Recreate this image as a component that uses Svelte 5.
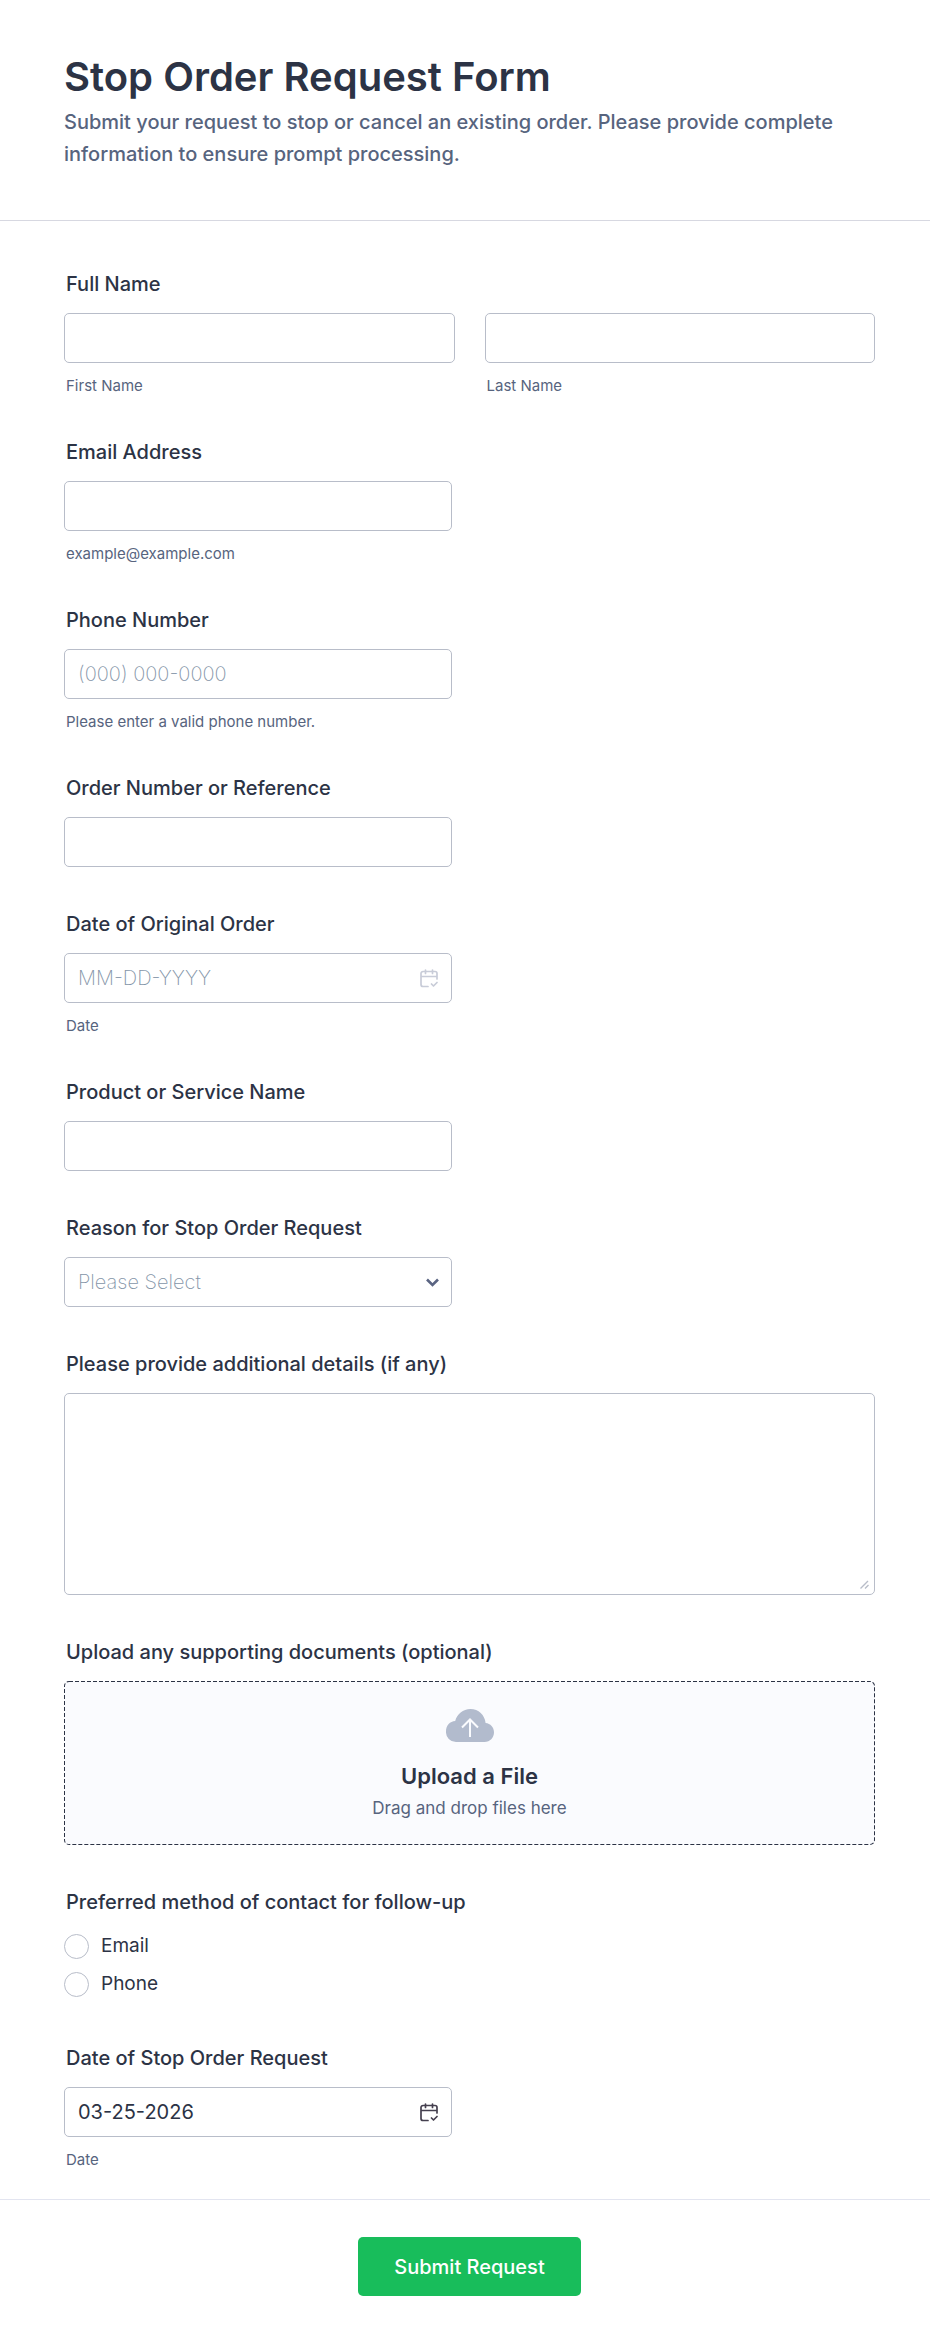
<script lang="ts">
	type Field = {
		id: string;
		label: string;
		type: 'text' | 'email' | 'tel' | 'date';
		placeholder?: string;
		value?: string;
		hint?: string;
	};

	const contactFields: Field[] = [
		{ id: 'email', label: 'Email Address', type: 'email', hint: 'example@example.com' },
		{
			id: 'phone',
			label: 'Phone Number',
			type: 'tel',
			placeholder: '(000) 000-0000',
			hint: 'Please enter a valid phone number.'
		},
		{ id: 'order', label: 'Order Number or Reference', type: 'text' },
		{
			id: 'order-date',
			label: 'Date of Original Order',
			type: 'date',
			placeholder: 'MM-DD-YYYY',
			hint: 'Date'
		},
		{ id: 'product', label: 'Product or Service Name', type: 'text' }
	];

	const requestDate: Field = {
		id: 'request-date',
		label: 'Date of Stop Order Request',
		type: 'date',
		value: '03-25-2026',
		hint: 'Date'
	};

	const contactMethods = ['Email', 'Phone'];

	let reason = $state('');
	let method = $state('');
</script>

{#snippet calendarIcon()}
	<svg viewBox="0 0 18 19" width="18" height="19" aria-hidden="true">
		<path
			d="M17 10V4.5A2 2 0 0 0 15 2.5H3A2 2 0 0 0 1 4.5V15.5A2 2 0 0 0 3 17.5H8M1 7.5H17M5.5 1V4.5M12.5 1V4.5M11.5 15L13.5 17L17 13.5"
		/>
	</svg>
{/snippet}

{#snippet textField(field: Field)}
	<div class="field">
		<label class="label" for={field.id}>{field.label}</label>
		<div class="control half">
			<input
				class="box"
				id={field.id}
				type={field.type === 'date' ? 'text' : field.type}
				placeholder={field.placeholder}
				value={field.value ?? ''}
				aria-describedby={field.hint ? `${field.id}-hint` : undefined}
			/>
			{#if field.type === 'date'}
				<button
					type="button"
					class="calendar"
					class:filled={!!field.value}
					aria-label="Pick a date"
				>
					{@render calendarIcon()}
				</button>
			{/if}
		</div>
		{#if field.hint}
			<span class="hint" id="{field.id}-hint">{field.hint}</span>
		{/if}
	</div>
{/snippet}

<form onsubmit={(e) => e.preventDefault()}>
	<header>
		<h1>Stop Order Request Form</h1>
		<p>
			Submit your request to stop or cancel an existing order. Please provide complete
			information to ensure prompt processing.
		</p>
	</header>

	<div class="fields">
		<div class="field" role="group" aria-labelledby="name-label">
			<span class="label" id="name-label">Full Name</span>
			<div class="name-row">
				<div class="name-part">
					<input class="box" id="first-name" type="text" />
					<label class="hint" for="first-name">First Name</label>
				</div>
				<div class="name-part">
					<input class="box" id="last-name" type="text" />
					<label class="hint" for="last-name">Last Name</label>
				</div>
			</div>
		</div>

		{#each contactFields as field (field.id)}
			{@render textField(field)}
		{/each}

		<div class="field">
			<label class="label" for="reason">Reason for Stop Order Request</label>
			<div class="control half">
				<select class="box" class:unset={reason === ''} id="reason" bind:value={reason}>
					<option value="">Please Select</option>
				</select>
				<svg class="chevron" viewBox="0 0 13 9" width="13" height="9" aria-hidden="true">
					<path d="M1 1.5L6.5 7L12 1.5" />
				</svg>
			</div>
		</div>

		<div class="field">
			<label class="label" for="details">Please provide additional details (if any)</label>
			<div class="control">
				<textarea class="box" id="details"></textarea>
				<svg class="grip" viewBox="0 0 9 9" width="9" height="9" aria-hidden="true">
					<path d="M.5 8.5L8 1M5 8.5L8.5 5" />
				</svg>
			</div>
		</div>

		<div class="field">
			<span class="label" id="upload-label">Upload any supporting documents (optional)</span>
			<label class="dropzone">
				<!-- dashes longer than the browser's own dashed border -->
				<svg class="outline" aria-hidden="true">
					<rect width="100%" height="100%" rx="5" />
				</svg>
				<input class="sr-only" type="file" multiple aria-labelledby="upload-label" />
				<svg class="cloud" viewBox="0 0 48 33" width="48" height="33" aria-hidden="true">
					<path
						class="cloud-body"
						d="M10 33A10 10 0 0 1 0 22.5C0 16.5 4 12.2 9.2 12C11 5 17 0 24.5 0C32.5 0 38.8 6 39.6 14C44.4 14.4 48 18.4 48 23.3C48 28.8 44 33 38.5 33Z"
					/>
					<path class="cloud-arrow" d="M24 28V10.5M16 18.5L24 10.5L32 18.5" />
				</svg>
				<strong>Upload a File</strong>
				<span class="drop-text">Drag and drop files here</span>
			</label>
		</div>

		<div class="field" role="radiogroup" aria-labelledby="method-label">
			<span class="label" id="method-label">Preferred method of contact for follow-up</span>
			<div class="radios">
				{#each contactMethods as option}
					<label class="radio">
						<input type="radio" name="method" value={option} bind:group={method} />
						{option}
					</label>
				{/each}
			</div>
		</div>

		{@render textField(requestDate)}
	</div>

	<footer>
		<button type="submit" class="submit">Submit Request</button>
	</footer>
</form>

<style>
	:global(body) {
		margin: 0;
		background: #fff;
	}

	form {
		font-family: Inter, 'Liberation Sans', sans-serif;
		font-size: 20px;
		line-height: 24px;
		color: #2c3345;
	}

	form * {
		box-sizing: border-box;
	}

	header {
		padding: 52px 55px 50px 64px;
		border-bottom: 1px solid #d7d8e1;
	}

	h1 {
		margin: 0;
		font-size: 40px;
		line-height: 50px;
		font-weight: 600;
	}

	header p {
		margin: 4px 0 0;
		line-height: 32px;
		font-weight: 500;
		color: #57647e;
	}

	.fields {
		display: flex;
		flex-direction: column;
		gap: 45px;
		padding: 51px 55px 30px 64px;
	}

	.field {
		display: flex;
		flex-direction: column;
	}

	.label {
		margin-bottom: 17px;
		padding-left: 2px;
		font-weight: 500;
	}

	.control {
		position: relative;
		display: flex;
	}

	.half {
		max-width: 388px;
	}

	.box {
		width: 100%;
		height: 50px;
		margin: 0;
		padding: 0 13px;
		border: 1px solid #b8bdc9;
		border-radius: 5px;
		background: #fff;
		font: inherit;
		color: inherit;
		outline: none;
	}

	.box:focus {
		border-color: #2e69ff;
	}

	.box::placeholder,
	.unset {
		font-weight: 200;
		color: #8495a8;
		opacity: 1;
	}

	select.box {
		appearance: none;
	}

	textarea.box {
		height: 202px;
		padding: 12px 13px;
		resize: none;
	}

	.hint {
		margin-top: 14px;
		padding-left: 2px;
		font-size: 15px;
		line-height: 18px;
		color: #57647e;
	}

	.name-row {
		display: flex;
		gap: 30px;
	}

	.name-part {
		flex: 1;
		display: flex;
		flex-direction: column;
	}

	.calendar {
		position: absolute;
		top: 0;
		right: 0;
		display: flex;
		align-items: center;
		height: 100%;
		padding: 0 14px;
		border: none;
		background: none;
		color: #c8ccd8;
		cursor: pointer;
	}

	.calendar.filled {
		color: #45404f;
	}

	.calendar path {
		fill: none;
		stroke: currentColor;
		stroke-width: 1.7;
		stroke-linecap: round;
		stroke-linejoin: round;
	}

	.chevron {
		position: absolute;
		top: 21px;
		right: 13px;
		pointer-events: none;
	}

	.chevron path {
		fill: none;
		stroke: #5a6482;
		stroke-width: 2.6;
	}

	.grip {
		position: absolute;
		right: 6px;
		bottom: 6px;
		pointer-events: none;
	}

	.grip path {
		fill: none;
		stroke: #b8bdc9;
		stroke-width: 1.4;
	}

	.dropzone {
		position: relative;
		display: flex;
		flex-direction: column;
		align-items: center;
		padding: 28px 20px 25px;
		border-radius: 5px;
		background: #fafbfe;
		cursor: pointer;
	}

	/* outer half of the stroke is clipped, leaving a 1px line */
	.outline {
		position: absolute;
		inset: 0;
		width: 100%;
		height: 100%;
		border-radius: 5px;
		overflow: hidden;
		pointer-events: none;
	}

	.outline rect {
		fill: none;
		stroke: #2c3345;
		stroke-width: 2;
		stroke-dasharray: 4 2;
	}

	.sr-only {
		position: absolute;
		width: 1px;
		height: 1px;
		overflow: hidden;
		opacity: 0;
	}

	.cloud-body {
		fill: #b2bbcd;
	}

	.cloud-arrow {
		fill: none;
		stroke: #fafbfe;
		stroke-width: 2;
	}

	.dropzone strong {
		margin-top: 20px;
		font-size: 22px;
		line-height: 28px;
		font-weight: 600;
	}

	.drop-text {
		margin-top: 6px;
		font-size: 17px;
		color: #57647e;
	}

	.radios {
		display: flex;
		flex-direction: column;
		gap: 8px;
		padding-bottom: 2px;
	}

	.radio {
		display: flex;
		align-items: center;
		gap: 12px;
		height: 30px;
		font-size: 19px;
	}

	.radio input {
		appearance: none;
		width: 25px;
		height: 25px;
		margin: 0;
		border: 1px solid #b8bdc9;
		border-radius: 50%;
		background: #fff;
	}

	.radio input:checked {
		border: 7px solid #2e69ff;
	}

	footer {
		display: flex;
		justify-content: center;
		padding: 37px 55px 50px 64px;
		border-top: 1px solid #e3e5f0;
	}

	.submit {
		height: 59px;
		padding: 0 36px;
		border: none;
		border-radius: 5px;
		background: #18bd5b;
		font: inherit;
		font-weight: 500;
		color: #fff;
		cursor: pointer;
	}
</style>
